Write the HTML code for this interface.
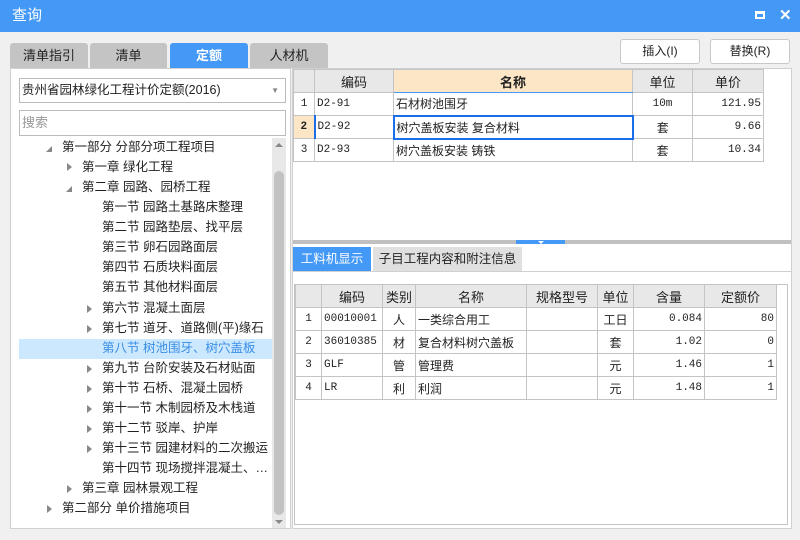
<!DOCTYPE html>
<html><head><meta charset="utf-8"><style>
*{margin:0;padding:0;box-sizing:border-box}
body{width:800px;height:540px;background:#f0f0f0;font-family:"Liberation Sans","Noto Sans CJK SC",sans-serif;font-size:12px;color:#222;position:relative;overflow:hidden}
.a{position:absolute}
.title{left:0;top:0;width:800px;height:32px;background:#4499f7;color:#fff;font-size:15px;line-height:32px;padding-left:12px}
.tab{top:43px;height:25px;background:#c4c4c4;text-align:center;line-height:25px;font-size:13px;border-radius:3px 3px 0 0}
.btn{top:39px;width:80px;height:25px;background:#fff;border:1px solid #c8c8c8;border-radius:3px;text-align:center;line-height:23px;font-size:12px}
table{border-collapse:collapse;position:absolute;table-layout:fixed}
td{border:1px solid #c4c4c4;height:23px;white-space:nowrap;overflow:hidden;padding:0 2px;font-size:12px}
.h td{background:#e8e8e8;text-align:center;font-size:13px}
.m{font-family:"Liberation Mono","Noto Sans CJK SC",monospace;font-size:11px}
.c{text-align:center}.r{text-align:right}
.tr{position:absolute;font-size:12.5px;height:20px;line-height:20px;white-space:nowrap}
.ar{position:absolute;width:0;height:0;border-top:4px solid transparent;border-bottom:4px solid transparent;border-left:5px solid #888}
.ad{position:absolute;width:0;height:0;border-left:6px solid transparent;border-bottom:6px solid #888}
</style></head><body>
<div class="a title">查询</div>
<div class="a" style="left:755px;top:11px;width:10px;height:8px;border:2px solid #fff;border-top-width:3px"></div>
<div class="a" style="left:779px;top:6px;color:#fff;font-size:15px;font-weight:bold">✕</div>

<div class="a tab" style="left:10px;width:78px">清单指引</div>
<div class="a tab" style="left:90px;width:77px">清单</div>
<div class="a tab" style="left:170px;width:78px;background:#4499f7;color:#fff;font-weight:bold">定额</div>
<div class="a tab" style="left:250px;width:78px">人材机</div>
<div class="a btn" style="left:620px">插入(I)</div>
<div class="a btn" style="left:710px">替换(R)</div>

<!-- left panel -->
<div class="a" style="left:10px;top:68px;width:281px;height:461px;background:#fff;border:1px solid #d0d0d0"></div>
<div class="a" style="left:19px;top:78px;width:267px;height:25px;border:1px solid #bbb;background:#fff;line-height:23px;padding-left:2px;font-size:12.5px">贵州省园林绿化工程计价定额(2016)<span style="position:absolute;right:6px;top:0;color:#888;font-size:8px">▼</span></div>
<div class="a" style="left:19px;top:110px;width:267px;height:26px;border:1px solid #bbb;background:#fff;line-height:24px;padding-left:2px;color:#999;font-size:13px">搜索</div>
<div class="a" style="left:272px;top:138px;width:14px;height:390px;background:#e8e8e8"></div>
<div class="a" style="left:274px;top:171px;width:10px;height:344px;background:#c2c2c2;border-radius:5px"></div>
<div class="a" style="left:275px;top:143px;border-left:4px solid transparent;border-right:4px solid transparent;border-bottom:4px solid #888"></div>
<div class="a" style="left:275px;top:520px;border-left:4px solid transparent;border-right:4px solid transparent;border-top:4px solid #888"></div>
<div class="a" style="left:19px;top:339px;width:253px;height:20px;background:#cce8ff"></div>

<div class="ad" style="left:46px;top:146px"></div><div class="tr" style="left:62px;top:137px">第一部分 分部分项工程项目</div>
<div class="ar" style="left:67px;top:163px"></div><div class="tr" style="left:82px;top:157px">第一章 绿化工程</div>
<div class="ad" style="left:66px;top:186px"></div><div class="tr" style="left:82px;top:177px">第二章 园路、园桥工程</div>
<div class="tr" style="left:102px;top:197px">第一节 园路土基路床整理</div>
<div class="tr" style="left:102px;top:217px">第二节 园路垫层、找平层</div>
<div class="tr" style="left:102px;top:237px">第三节 卵石园路面层</div>
<div class="tr" style="left:102px;top:257px">第四节 石质块料面层</div>
<div class="tr" style="left:102px;top:277px">第五节 其他材料面层</div>
<div class="ar" style="left:87px;top:305px"></div><div class="tr" style="left:102px;top:298px">第六节 混凝土面层</div>
<div class="ar" style="left:87px;top:325px"></div><div class="tr" style="left:102px;top:318px">第七节 道牙、道路侧(平)缘石</div>
<div class="tr" style="left:102px;top:338px;color:#3a8ee6">第八节 树池围牙、树穴盖板</div>
<div class="ar" style="left:87px;top:365px"></div><div class="tr" style="left:102px;top:358px">第九节 台阶安装及石材贴面</div>
<div class="ar" style="left:87px;top:385px"></div><div class="tr" style="left:102px;top:378px">第十节 石桥、混凝土园桥</div>
<div class="ar" style="left:87px;top:405px"></div><div class="tr" style="left:102px;top:398px">第十一节 木制园桥及木栈道</div>
<div class="ar" style="left:87px;top:425px"></div><div class="tr" style="left:102px;top:418px">第十二节 驳岸、护岸</div>
<div class="ar" style="left:87px;top:445px"></div><div class="tr" style="left:102px;top:438px">第十三节 园建材料的二次搬运</div>
<div class="tr" style="left:102px;top:458px">第十四节 现场搅拌混凝土、…</div>
<div class="ar" style="left:67px;top:485px"></div><div class="tr" style="left:82px;top:478px">第三章 园林景观工程</div>
<div class="ar" style="left:47px;top:505px"></div><div class="tr" style="left:62px;top:498px">第二部分 单价措施项目</div>

<!-- right panel -->
<div class="a" style="left:292px;top:68px;width:500px;height:461px;background:#fff;border:1px solid #d0d0d0"></div>
<table style="left:293px;top:69px;width:471px">
<colgroup><col style="width:21px"><col style="width:79px"><col style="width:239px"><col style="width:60px"><col style="width:71px"></colgroup>
<tr class="h"><td></td><td>编码</td><td style="background:#fde6c6;font-weight:bold;border-bottom:1px solid #4499f7">名称</td><td>单位</td><td>单价</td></tr>
<tr><td class="c m">1</td><td class="m">D2-91</td><td>石材树池围牙</td><td class="c m">10m</td><td class="r m">121.95</td></tr>
<tr><td class="c m" style="background:#fde6c6;font-weight:bold;border-right:2px solid #1a6ee8">2</td><td class="m">D2-92</td><td style="border:2px solid #1a6ee8">树穴盖板安装 复合材料</td><td class="c">套</td><td class="r m">9.66</td></tr>
<tr><td class="c m">3</td><td class="m">D2-93</td><td>树穴盖板安装 铸铁</td><td class="c">套</td><td class="r m">10.34</td></tr>
</table>
<div class="a" style="left:293px;top:240px;width:498px;height:4px;background:#c0c0c0"></div>
<div class="a" style="left:516px;top:240px;width:49px;height:4px;background:#4499f7"></div>
<div class="a" style="left:538px;top:241px;border-left:3px solid transparent;border-right:3px solid transparent;border-top:3px solid #fff"></div>
<div class="a" style="left:293px;top:247px;width:78px;height:24px;background:#4499f7;color:#fff;text-align:center;line-height:24px;font-size:12.5px">工料机显示</div>
<div class="a" style="left:373px;top:247px;width:149px;height:24px;background:#e0e0e0;text-align:center;line-height:24px;font-size:12.5px">子目工程内容和附注信息</div>
<div class="a" style="left:293px;top:271px;width:498px;height:1px;background:#d0d0d0"></div>
<div class="a" style="left:294px;top:284px;width:494px;height:241px;border:1px solid #c4c4c4"></div>
<table style="left:295px;top:284px;width:481px">
<colgroup><col style="width:26px"><col style="width:61px"><col style="width:33px"><col style="width:111px"><col style="width:71px"><col style="width:36px"><col style="width:71px"><col style="width:72px"></colgroup>
<tr class="h"><td></td><td>编码</td><td>类别</td><td>名称</td><td>规格型号</td><td>单位</td><td>含量</td><td>定额价</td></tr>
<tr><td class="c m">1</td><td class="m">00010001</td><td class="c">人</td><td>一类综合用工</td><td></td><td class="c">工日</td><td class="r m">0.084</td><td class="r m">80</td></tr>
<tr><td class="c m">2</td><td class="m">36010385</td><td class="c">材</td><td>复合材料树穴盖板</td><td></td><td class="c">套</td><td class="r m">1.02</td><td class="r m">0</td></tr>
<tr><td class="c m">3</td><td class="m">GLF</td><td class="c">管</td><td>管理费</td><td></td><td class="c">元</td><td class="r m">1.46</td><td class="r m">1</td></tr>
<tr><td class="c m">4</td><td class="m">LR</td><td class="c">利</td><td>利润</td><td></td><td class="c">元</td><td class="r m">1.48</td><td class="r m">1</td></tr>
</table>
</body></html>
